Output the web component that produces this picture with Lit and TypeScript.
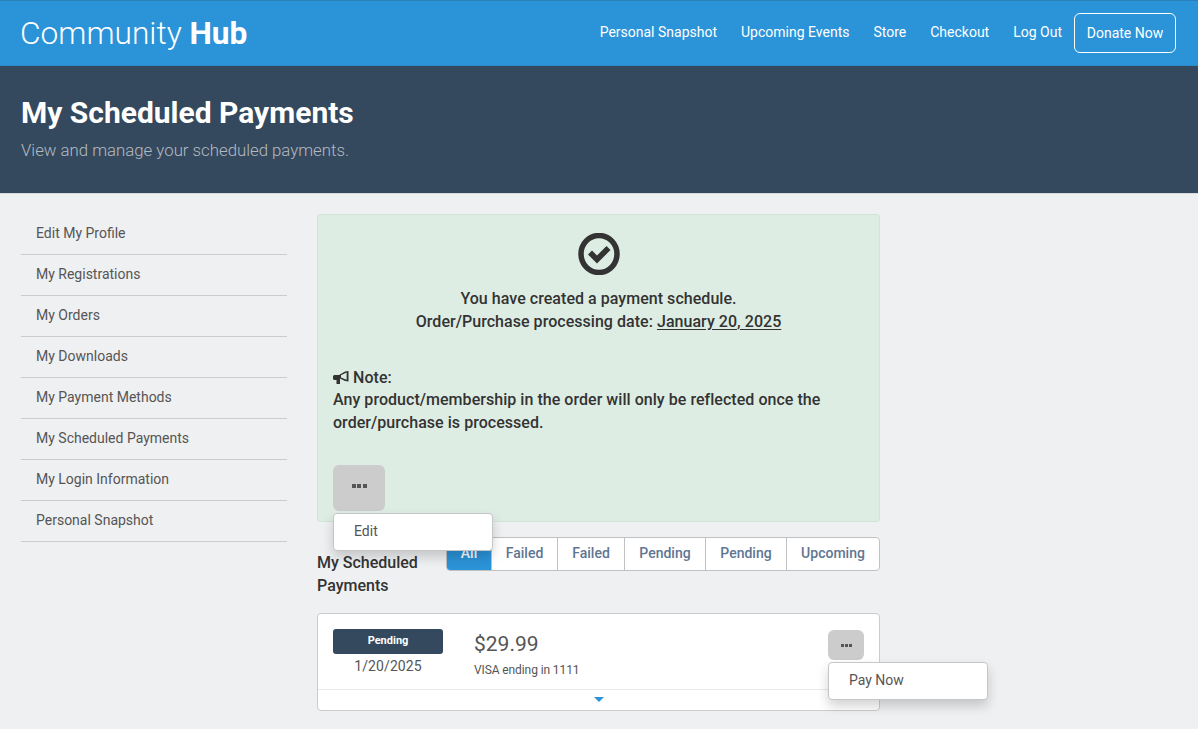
import { LitElement, html, css } from "lit";
import { customElement } from "lit/decorators.js";

const side = ["Edit My Profile","My Registrations","My Orders","My Downloads","My Payment Methods","My Scheduled Payments","My Login Information","Personal Snapshot"];
const nav = ["Personal Snapshot","Upcoming Events","Store","Checkout","Log Out"];
const tabs = ["All","Failed","Failed","Pending","Pending","Upcoming"];

@customElement("app-root")
export class AppRoot extends LitElement {
  static styles = css`
    :host { display: block; height: 729px; overflow: hidden; background: #eff0f2; font-family: Roboto, "Liberation Sans", sans-serif; color: #333; font-size: 14px; }
    * { box-sizing: border-box; }
    .top { height: 66px; background: #2b93d8; border-top: 1px solid #2a7fb8; border-bottom: 1px solid #2a8bcc; display: flex; align-items: center; justify-content: space-between; padding: 0 22px 0 20px; color: #fff; }
    .logo { font-size: 31.7px; font-weight: 300; line-height: 1; margin-top: 1px; }
    .logo b { font-weight: 700; }
    .nav { display: flex; align-items: center; gap: 24px; font-size: 14px; font-weight: 400; }
    .nav span { margin-top: -3px; }
    .donate { width: 102px; height: 40px; margin-left: -12px; border: 1px solid #fff; border-radius: 6px; display: flex; align-items: center; justify-content: center; }
    .hero { height: 128px; background: #34495e; border-bottom: 1px solid #d8dadd; padding: 29px 21px 0; }
    .hero h1 { margin: 0; font-size: 30px; line-height: 36px; font-weight: 700; color: #fff; }
    .hero p { margin: 8px 0 0; font-size: 16.8px; line-height: 22px; font-weight: 300; color: #b4bac0; }
    .body { display: grid; grid-template-columns: 266px 563px; gap: 30px; padding: 20px 0 0 21px; }
    .side { display: flex; flex-direction: column; }
    .side div { height: 41px; border-bottom: 1px solid #ccc; padding: 0 15px 2px; display: flex; align-items: center; color: #555; font-size: 14px; }
    .alert { position: relative; height: 308px; background: #deede3; border: 1px solid #cfe6d6; border-radius: 3px; padding: 18px 15px 0; font-size: 16px; font-weight: 500; line-height: 23px; color: #333; letter-spacing: .04px; }
    .center { text-align: center; }
    .center svg { display: block; margin: 0 auto 12px; }
    .center u { text-underline-offset: 2px; }
    .note { margin-top: 34px; }
    .note-label { height: 21px; line-height: 21px; }
    .note svg { vertical-align: -2px; }
    .more { display: flex; align-items: center; justify-content: center; background: #ccc; border-radius: 6px; }
    .more i { display: block; background: #555; }
    .more.lg { width: 52px; height: 46px; margin-top: 31px; gap: 1.5px; padding-bottom: 5px; }
    .more.lg i { width: 4px; height: 4px; }
    .more.sm { width: 36px; height: 30px; position: absolute; right: 15px; top: 16px; gap: 1px; }
    .more.sm i { width: 3px; height: 3px; }
    .menu { position: absolute; width: 160px; height: 38px; background: #fff; border: 1px solid #c4c6c8; border-radius: 4px; box-shadow: 0 6px 12px rgba(0,0,0,.175); display: flex; align-items: center; padding: 0 0 2px 20px; font-size: 14px; font-weight: 400; letter-spacing: 0; color: #555; z-index: 2; }
    .menu.edit { left: 15px; top: 298px; }
    .menu.pay { left: 510px; top: 48px; }
    .row { display: flex; justify-content: space-between; margin-top: 15px; }
    .title { width: 120px; font-size: 16px; font-weight: 500; line-height: 23px; margin-top: 14px; color: #333; }
    .tabs { display: flex; height: 34px; width: 434px; background: #fff; border: 1px solid #bfc2c5; border-radius: 4px; overflow: hidden; }
    .tabs span { display: flex; align-items: center; justify-content: center; padding-bottom: 2px; font-size: 14px; font-weight: 500; color: #5f7692; border-left: 1px solid #bfc2c5; }
    .tabs span:first-child { border-left: 0; background: #2b93d8; color: #fff; }
    .card { position: relative; height: 98px; margin-top: 16px; background: #fff; border: 1px solid #ccc; border-radius: 4px; }
    .main-row { height: 76px; border-bottom: 1px solid #e8e9ea; padding: 15px 15px 0; display: flex; }
    .status { width: 110px; text-align: center; }
    .badge { height: 25px; background: #34495e; border-radius: 3px; color: #fff; font-size: 11px; font-weight: 700; display: flex; align-items: center; justify-content: center; padding-bottom: 3px; }
    .date { margin-top: 3px; font-size: 14px; line-height: 18px; color: #555; letter-spacing: .1px; }
    .pay-info { margin-left: 31px; padding-top: 1px; color: #555; }
    .amt { font-size: 21px; line-height: 28px; }
    .visa { margin-top: 4px; font-size: 12px; line-height: 16px; letter-spacing: -.1px; }
    .caret { display: block; width: 0; height: 0; margin: 7px auto 0; border: 5px solid transparent; border-top: 5px solid #2b93d8; border-bottom: 0; }
  `;

  render() {
    const widths = [44, 66, 67, 81, 81, 93];
    return html`
      <div class="top">
        <div class="logo">Community <b>Hub</b></div>
        <div class="nav">${nav.map(n => html`<span>${n}</span>`)}<div class="donate">Donate Now</div></div>
      </div>
      <div class="hero">
        <h1>My Scheduled Payments</h1>
        <p>View and manage your scheduled payments.</p>
      </div>
      <div class="body">
        <div class="side">${side.map(s => html`<div>${s}</div>`)}</div>
        <div>
          <div class="alert">
            <div class="center">
              <svg width="42" height="42" viewBox="0 0 42 42"><ellipse cx="21" cy="21" rx="18" ry="18.5" fill="none" stroke="#333" stroke-width="5.5"/><path d="M10 21.5l4-4 5 5 9.5-9.5 4 4-13.5 13.5z" fill="#333"/></svg>
              You have created a payment schedule.<br />
              Order/Purchase processing date: <u>January 20, 2025</u>
            </div>
            <div class="note">
              <div class="note-label"><svg width="16" height="14" viewBox="0 0 16 14"><path d="M0 5.5Q0 4 1.5 4H6L12 .5 15.5 0V10.5L12 10 7 7.5V13H3.5V9H1.5Q0 9 0 7.5Z" fill="#333"/><path d="M8 4.2 13.6 1.6V8.8L8 6.4Z" fill="#deede3"/></svg> Note:</div>
              Any product/membership in the order will only be reflected once the order/purchase is processed.
            </div>
            <div class="more lg"><i></i><i></i><i></i></div>
            <div class="menu edit">Edit</div>
          </div>
          <div class="row">
            <div class="title">My Scheduled Payments</div>
            <div class="tabs">${tabs.map((t, i) => html`<span style="width:${widths[i]}px">${t}</span>`)}</div>
          </div>
          <div class="card">
            <div class="main-row">
              <div class="status"><div class="badge">Pending</div><div class="date">1/20/2025</div></div>
              <div class="pay-info"><div class="amt">$29.99</div><div class="visa">VISA ending in 1111</div></div>
            </div>
            <span class="caret"></span>
            <div class="more sm"><i></i><i></i><i></i></div>
            <div class="menu pay">Pay Now</div>
          </div>
        </div>
      </div>
    `;
  }
}
